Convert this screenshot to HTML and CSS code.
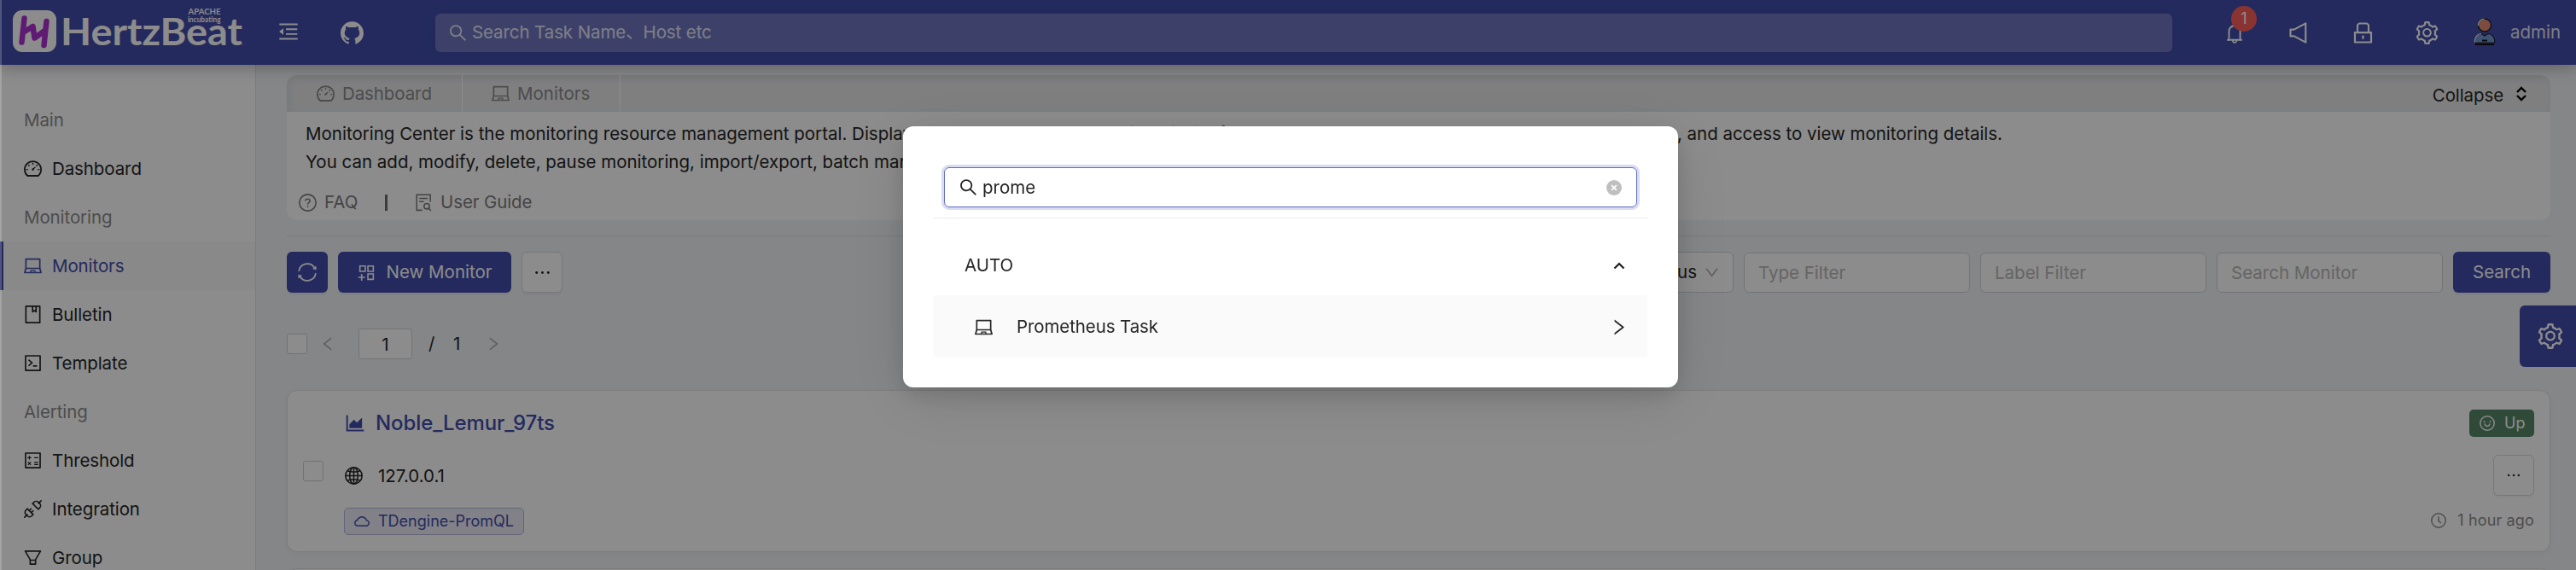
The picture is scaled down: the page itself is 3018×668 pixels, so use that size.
FILE: index.html
```html
<!DOCTYPE html>
<html lang="en">
<head>
<meta charset="utf-8">
<title>HertzBeat</title>
<link rel="stylesheet" href="styles.css">
</head>
<body>
<svg class="sprite" aria-hidden="true">
  <symbol id="search" viewBox="64 64 896 896"><path d="M909.6 854.5L649.9 594.8C690.2 542.7 712 479 712 412c0-80.2-31.3-155.4-87.9-212.1-56.6-56.7-132-87.9-212.1-87.9s-155.5 31.3-212.1 87.9C143.2 256.5 112 331.8 112 412c0 80.1 31.3 155.5 87.9 212.1C256.5 680.8 331.8 712 412 712c67 0 130.6-21.8 182.7-62l259.7 259.6a8.2 8.2 0 0011.6 0l43.6-43.5a8.2 8.2 0 000-11.6zM570.4 570.4C528 612.7 471.8 636 412 636s-116-23.3-158.4-65.6C211.3 528 188 471.8 188 412s23.3-116.1 65.6-158.4C296 211.3 352.2 188 412 188s116.1 23.2 158.4 65.6S636 352.2 636 412s-23.3 116.1-65.6 158.4z"/></symbol>
  <symbol id="laptop" viewBox="64 64 896 896"><path d="M956.9 845.1L896.4 632V168c0-17.7-14.3-32-32-32h-704c-17.7 0-32 14.3-32 32v464L67.9 845.1C60.4 866 75.8 888 98 888h828.8c22.2 0 37.6-22 30.1-42.9zM200.4 208h624v395h-624V208zm228.3 608l8.1-37h150.3l8.1 37H428.7zm224 0l-19.1-86.7c-.8-3.7-4.1-6.3-7.8-6.3H398.2c-3.8 0-7 2.6-7.8 6.3L371.3 816H151l42.3-149h638.2l42.3 149H652.7z"/></symbol>
  <symbol id="dashboard" viewBox="64 64 896 896"><path d="M924.8 385.6a446.7 446.7 0 00-96-142.4 446.7 446.7 0 00-142.4-96C631.1 123.8 572.5 112 512 112s-119.1 11.8-174.4 35.2a446.7 446.7 0 00-142.4 96 446.7 446.7 0 00-96 142.4C75.8 440.9 64 499.5 64 560c0 132.7 58.3 257.7 159.9 343.1l1.7 1.4c5.8 4.8 13.1 7.5 20.6 7.5h531.7c7.5 0 14.8-2.7 20.6-7.5l1.7-1.4C901.7 817.7 960 692.7 960 560c0-60.5-11.9-119.1-35.2-174.4zM761.4 836H262.6A371.12 371.12 0 01140 560c0-99.4 38.7-192.8 109-263 70.3-70.3 163.7-109 263-109 99.4 0 192.8 38.7 263 109 70.3 70.3 109 163.7 109 263 0 105.6-44.5 205.5-122.6 276zM623.5 421.5a8.03 8.03 0 00-11.3 0L527.7 506c-18.7-5-39.4-.2-54.1 14.5a55.95 55.95 0 000 79.2 55.95 55.95 0 0079.2 0 55.87 55.87 0 0014.5-54.1l84.5-84.5c3.1-3.1 3.1-8.2 0-11.3l-28.3-28.3zM490 320h44c4.4 0 8-3.6 8-8v-80c0-4.4-3.6-8-8-8h-44c-4.4 0-8 3.6-8 8v80c0 4.4 3.6 8 8 8zm260 218v44c0 4.4 3.6 8 8 8h80c4.4 0 8-3.6 8-8v-44c0-4.4-3.6-8-8-8h-80c-4.4 0-8 3.6-8 8zm12.7-197.2l-31.1-31.1a8.03 8.03 0 00-11.3 0l-56.6 56.6a8.03 8.03 0 000 11.3l31.1 31.1c3.1 3.1 8.2 3.1 11.3 0l56.6-56.6c3.1-3.1 3.1-8.2 0-11.3zm-458.6-31.1a8.03 8.03 0 00-11.3 0l-31.1 31.1a8.03 8.03 0 000 11.3l56.6 56.6c3.1 3.1 8.2 3.1 11.3 0l31.1-31.1c3.1-3.1 3.1-8.2 0-11.3l-56.6-56.6zM262 530h-80c-4.4 0-8 3.6-8 8v44c0 4.4 3.6 8 8 8h80c4.4 0 8-3.6 8-8v-44c0-4.4-3.6-8-8-8z"/></symbol>
  <symbol id="setting" viewBox="64 64 896 896"><path d="M924.8 625.7l-65.5-56c3.1-19 4.7-38.4 4.7-57.8s-1.6-38.8-4.7-57.8l65.5-56a32.03 32.03 0 009.3-35.2l-.9-2.6a443.74 443.74 0 00-79.7-137.9l-1.8-2.1a32.12 32.12 0 00-35.1-9.5l-81.3 28.9c-30-24.6-63.5-44-99.7-57.6l-15.7-85a32.05 32.05 0 00-25.8-25.7l-2.7-.5c-52.1-9.4-106.9-9.4-159 0l-2.7.5a32.05 32.05 0 00-25.8 25.7l-15.8 85.4a351.86 351.86 0 00-99 57.4l-81.9-29.1a32 32 0 00-35.1 9.5l-1.8 2.1a446.02 446.02 0 00-79.7 137.9l-.9 2.6c-4.5 12.5-.8 26.5 9.3 35.2l66.3 56.6c-3.1 18.8-4.6 38-4.6 57.1 0 19.2 1.5 38.4 4.6 57.1L99 625.5a32.03 32.03 0 00-9.3 35.2l.9 2.6c18.1 50.4 44.9 96.9 79.7 137.9l1.8 2.1a32.12 32.12 0 0035.1 9.5l81.9-29.1c29.8 24.5 63.1 43.9 99 57.4l15.8 85.4a32.05 32.05 0 0025.8 25.7l2.7.5a449.4 449.4 0 00159 0l2.7-.5a32.05 32.05 0 0025.8-25.7l15.7-85a350 350 0 0099.7-57.6l81.3 28.9a32 32 0 0035.1-9.5l1.8-2.1c34.8-41.1 61.6-87.5 79.7-137.9l.9-2.6c4.5-12.3.8-26.3-9.3-35zM788.3 465.9c2.5 15.1 3.8 30.6 3.8 46.1s-1.3 31-3.8 46.1l-6.6 40.1 74.7 63.9a370.03 370.03 0 01-42.6 73.6L721 702.8l-31.4 25.8c-23.9 19.6-50.5 35-79.3 45.8l-38.1 14.3-17.9 97a377.5 377.5 0 01-85 0l-17.9-97.2-37.8-14.5c-28.5-10.8-55-26.2-78.7-45.7l-31.4-25.9-93.4 33.2c-17-22.9-31.2-47.6-42.6-73.6l75.5-64.5-6.5-40c-2.4-14.9-3.7-30.3-3.7-45.5 0-15.3 1.2-30.6 3.7-45.5l6.5-40-75.5-64.5c11.3-26.1 25.6-50.7 42.6-73.6l93.4 33.2 31.4-25.9c23.7-19.5 50.2-34.9 78.7-45.7l37.9-14.3 17.9-97.2c28.1-3.2 56.8-3.2 85 0l17.9 97 38.1 14.3c28.7 10.8 55.4 26.2 79.3 45.8l31.4 25.8 92.8-32.9c17 22.9 31.2 47.6 42.6 73.6L781.8 426l6.5 39.9zM512 326c-97.2 0-176 78.8-176 176s78.8 176 176 176 176-78.8 176-176-78.8-176-176-176zm79.2 255.2A111.6 111.6 0 01512 614c-29.9 0-58-11.7-79.2-32.8A111.6 111.6 0 01400 502c0-29.9 11.7-58 32.8-79.2C454 401.6 482.1 390 512 390c29.9 0 58 11.6 79.2 32.8A111.6 111.6 0 01624 502c0 29.9-11.7 58-32.8 79.2z"/></symbol>
  <symbol id="github" viewBox="64 64 896 896"><path d="M511.6 76.3C264.3 76.2 64 276.4 64 523.5 64 718.9 189.3 885 363.8 946c23.5 5.9 19.9-10.8 19.9-22.2v-77.5c-135.7 15.9-141.2-73.9-150.3-88.9C215 726 171.5 718 184.5 703c30.9-15.9 62.4 4 98.9 57.9 26.4 39.1 77.9 32.5 104 26 5.7-23.5 17.9-44.5 34.7-60.8-140.6-25.2-199.2-111-199.2-213 0-49.5 16.3-95 48.3-131.7-20.4-60.5 1.9-112.3 4.9-120 58.1-5.2 118.5 41.6 123.2 45.3 33-8.9 70.7-13.6 112.9-13.6 42.4 0 80.2 4.9 113.5 13.9 11.3-8.6 67.3-48.8 121.3-43.9 2.9 7.7 24.7 58.3 5.5 118 32.4 36.8 48.9 82.7 48.9 132.3 0 102.2-59 188.1-200 212.9a127.5 127.5 0 0138.1 91v112.5c.8 9 0 17.9 15 17.9 177.1-59.7 304.6-227 304.6-424.1 0-247.2-200.4-447.3-447.5-447.3z"/></symbol>
  <symbol id="fold" viewBox="64 64 896 896"><path d="M408 442h480c4.4 0 8-3.6 8-8v-56c0-4.4-3.6-8-8-8H408c-4.4 0-8 3.6-8 8v56c0 4.4 3.6 8 8 8zm-8 204c0 4.4 3.6 8 8 8h480c4.4 0 8-3.6 8-8v-56c0-4.4-3.6-8-8-8H408c-4.4 0-8 3.6-8 8v56zm504-486H120c-4.4 0-8 3.6-8 8v56c0 4.4 3.6 8 8 8h784c4.4 0 8-3.6 8-8v-56c0-4.4-3.6-8-8-8zm0 632H120c-4.4 0-8 3.6-8 8v56c0 4.4 3.6 8 8 8h784c4.4 0 8-3.6 8-8v-56c0-4.4-3.6-8-8-8zM115.4 518.9L271.7 642c5.8 4.6 14.4.5 14.4-6.9V388.9c0-7.4-8.5-11.5-14.4-6.9L115.4 505.1a8.74 8.74 0 000 13.8z"/></symbol>
  <symbol id="bell" viewBox="64 64 896 896"><path d="M816 768h-24V428c0-141.1-104.3-257.8-240-277.2V112c0-22.1-17.9-40-40-40s-40 17.9-40 40v38.8C336.3 170.2 232 286.9 232 428v340h-24c-17.7 0-32 14.3-32 32v32c0 4.4 3.6 8 8 8h216c0 61.8 50.2 112 112 112s112-50.2 112-112h216c4.4 0 8-3.6 8-8v-32c0-17.7-14.3-32-32-32zM512 888c-26.5 0-48-21.5-48-48h96c0 26.5-21.5 48-48 48zM304 768V428c0-55.6 21.6-107.8 60.9-147.1S456.4 220 512 220c55.6 0 107.8 21.6 147.1 60.9S720 372.4 720 428v340H304z"/></symbol>
  <symbol id="lock" viewBox="64 64 896 896"><path d="M832 464h-68V240c0-70.7-57.3-128-128-128H388c-70.7 0-128 57.3-128 128v224h-68c-17.7 0-32 14.3-32 32v384c0 17.7 14.3 32 32 32h640c17.7 0 32-14.3 32-32V496c0-17.7-14.3-32-32-32zM332 240c0-30.9 25.1-56 56-56h248c30.9 0 56 25.1 56 56v224H332V240zm460 600H232V536h560v304zM484 701v53c0 4.4 3.6 8 8 8h40c4.4 0 8-3.6 8-8v-53a48.01 48.01 0 10-56 0z"/></symbol>
  <symbol id="right" viewBox="64 64 896 896"><path d="M765.7 486.8L314.9 134.7A7.97 7.97 0 00302 141v77.3c0 4.9 2.3 9.6 6.1 12.6l360 281.1-360 281.1c-3.9 3-6.1 7.7-6.1 12.6V883c0 6.7 7.7 10.4 12.9 6.3l450.8-352.1a31.96 31.96 0 000-50.4z"/></symbol>
  <symbol id="left" viewBox="64 64 896 896"><path d="M724 218.3V141c0-6.7-7.7-10.4-12.9-6.3L260.3 486.8a31.86 31.86 0 000 50.3l450.8 352.1c5.3 4.1 12.9.4 12.9-6.3v-77.3c0-4.9-2.3-9.6-6.1-12.6l-360-281 360-281.1c3.8-3 6.1-7.7 6.1-12.6z"/></symbol>
  <symbol id="down" viewBox="64 64 896 896"><path d="M884 256h-75c-5.1 0-9.9 2.5-12.9 6.6L512 654.2 227.9 262.6c-3-4.1-7.8-6.6-12.9-6.6h-75c-6.5 0-10.3 7.4-6.5 12.7l352.6 486.1c12.8 17.6 39 17.6 51.7 0l352.6-486.1c3.9-5.3.1-12.7-6.4-12.7z"/></symbol>
  <symbol id="cloud" viewBox="64 64 896 896"><path d="M811.4 418.7C765.6 297.9 648.9 212 512.2 212S258.8 297.8 213 418.6C127.3 441.1 64 519.1 64 612c0 110.5 89.5 200 199.9 200h496.2C870.5 812 960 722.5 960 612c0-92.7-63.1-170.7-148.6-193.3zm36.3 281a123.07 123.07 0 01-87.6 36.3H263.9c-33.1 0-64.2-12.9-87.6-36.3A123.3 123.3 0 01140 612c0-28 9.1-54.3 26.2-76.3a125.7 125.7 0 0166.1-43.7l37.9-9.9 13.9-36.6c8.6-22.8 20.6-44.1 35.7-63.4a245.6 245.6 0 0152.4-49.9c41.1-28.9 89.5-44.2 140-44.2s98.9 15.3 140 44.2c19.9 14 37.5 30.8 52.4 49.9 15.1 19.3 27.1 40.7 35.7 63.4l13.8 36.5 37.8 10c54.3 14.5 92.1 63.8 92.1 120 0 33.1-12.9 64.3-36.3 87.7z"/></symbol>
  <symbol id="area" viewBox="64 64 896 896"><path d="M888 792H200V168c0-4.4-3.6-8-8-8h-56c-4.4 0-8 3.6-8 8v688c0 4.4 3.6 8 8 8h752c4.4 0 8-3.6 8-8v-56c0-4.4-3.6-8-8-8zm-616-64h536c4.4 0 8-3.6 8-8V284c0-7.2-8.7-10.7-13.7-5.7L592 488.6l-125.4-124a8.03 8.03 0 00-11.3 0l-189 189.6a7.87 7.87 0 00-2.3 5.6V720c0 4.4 3.6 8 8 8z"/></symbol>
  <symbol id="appadd" viewBox="64 64 896 896"><g fill="none" stroke="currentColor" stroke-width="68"><path d="M178 178h268v268H178zM578 178h268v268H578zM578 578h268v268H578z"/><path d="M96 744h336M264 576v336"/></g></symbol>
  <symbol id="sync" viewBox="64 64 896 896"><g fill="none" stroke="currentColor" stroke-width="66"><path d="M143 470A372 372 0 01826 316M881 554A372 372 0 01198 708"/></g><path d="M738 372l172 36-8-176zM286 652L114 616l8 176z"/></symbol>
  <symbol id="sound" viewBox="64 64 896 896"><path fill="none" stroke="currentColor" stroke-width="72" stroke-linejoin="round" d="M180 382h140l450-240v740L320 642H180z"/></symbol>
  <symbol id="book" viewBox="64 64 896 896"><path fill="none" stroke="currentColor" stroke-width="72" stroke-linejoin="round" d="M164 100h696v824H164zM500 100v280l86-66 86 66V100"/></symbol>
  <symbol id="code" viewBox="64 64 896 896"><path fill="none" stroke="currentColor" stroke-width="72" stroke-linejoin="round" d="M148 148h728v728H148z"/><path fill="none" stroke="currentColor" stroke-width="68" d="M300 350l170 150-170 150M520 656h200"/></symbol>
  <symbol id="calc" viewBox="64 64 896 896"><path fill="none" stroke="currentColor" stroke-width="72" stroke-linejoin="round" d="M148 148h728v728H148z"/><path fill="none" stroke="currentColor" stroke-width="52" d="M250 380h180M340 290v180M580 380h200M580 610h200M580 720h200M268 590l144 150M412 590L268 740"/></symbol>
  <symbol id="api" viewBox="64 64 896 896"><g fill="none" stroke="currentColor" stroke-width="68" stroke-linecap="round"><path d="M100 924l130-130M794 230l130-130"/><path d="M240 500L524 784l-60 70a160 160 0 01-236 0l-60-60a160 160 0 010-230zM500 240L784 524l66-70a160 160 0 000-226l-54-54a160 160 0 00-226 0z"/><path d="M330 590l90-90M434 694l90-90"/></g></symbol>
  <symbol id="filter" viewBox="64 64 896 896"><path fill="none" stroke="currentColor" stroke-width="70" stroke-linejoin="round" d="M130 186h764L646 610v228H378V610zM378 640h268"/></symbol>
  <symbol id="question" viewBox="64 64 896 896"><g fill="none" stroke="currentColor" stroke-width="68"><circle cx="512" cy="512" r="412"/><path d="M400 425c0-130 224-130 224 0 0 80-112 92-112 180"/></g><circle cx="512" cy="704" r="40"/></symbol>
  <symbol id="guide" viewBox="64 64 896 896"><g fill="none" stroke="currentColor" stroke-width="66"><path d="M430 890H160V120h680v350M290 300h420M290 460h220"/><circle cx="660" cy="690" r="136"/><path d="M756 786l110 130"/></g></symbol>
  <symbol id="globe" viewBox="64 64 896 896"><g fill="none" stroke="currentColor" stroke-width="66"><circle cx="512" cy="512" r="412"/><ellipse cx="512" cy="512" rx="205" ry="412"/><path d="M512 100v824M100 512h824M190 270q322 120 644 0M190 754q322-120 644 0"/></g></symbol>
  <symbol id="smile" viewBox="64 64 896 896"><g fill="none" stroke="currentColor" stroke-width="72"><circle cx="512" cy="512" r="410"/><path d="M370 540c16 190 268 190 284 0"/></g><circle cx="336" cy="421" r="48"/><circle cx="688" cy="421" r="48"/></symbol>
  <symbol id="clock" viewBox="64 64 896 896"><g fill="none" stroke="currentColor" stroke-width="72"><circle cx="512" cy="512" r="410"/><path d="M512 280v270l150 110"/></g></symbol>
  <symbol id="dots" viewBox="64 64 896 896"><circle cx="222" cy="512" r="62"/><circle cx="512" cy="512" r="62"/><circle cx="802" cy="512" r="62"/></symbol>
  <symbol id="close" viewBox="64 64 896 896"><circle cx="512" cy="512" r="448"/><path d="M368 368l288 288M656 368L368 656" stroke="#fff" stroke-width="84"/></symbol>
</svg>

<div class="page">
  <header class="header">
    <svg class="logo" viewBox="0 0 300 76">
      <rect x="15" y="12" width="51" height="49" rx="11" fill="#fff"/>
      <path d="M28.500 21.500L25.500 49.500M54.500 25L51.500 53M27 38L38.500 31L40.500 44.500L52.500 36" fill="none" stroke="#ad31d1" stroke-width="6.500" stroke-linecap="round" stroke-linejoin="round"/>
      <text class="logo-name" x="71" y="53" textLength="213" lengthAdjust="spacingAndGlyphs">HertzBeat</text>
      <text class="logo-tag" x="220.500" y="16.500" textLength="38" lengthAdjust="spacingAndGlyphs">APACHE</text>
      <text class="logo-sub" x="220" y="26" textLength="38.500" lengthAdjust="spacingAndGlyphs">incubating</text>
    </svg>
    <svg class="icon i24 fold"><use href="#fold"/></svg>
    <svg class="icon i27 github"><use href="#github"/></svg>
    <div class="top-search"><svg class="icon"><use href="#search"/></svg><span>Search Task Name、Host etc</span></div>
    <div class="actions">
      <span class="bell"><svg class="icon i24"><use href="#bell"/></svg><b class="count">1</b></span>
      <svg class="icon i27"><use href="#sound"/></svg>
      <svg class="icon i27"><use href="#lock"/></svg>
      <svg class="icon i27"><use href="#setting"/></svg>
    </div>
    <svg class="avatar" viewBox="0 0 28 34">
      <path d="M2 30C2 23 6 19.500 10 19.500L14 22L18 19.500C22 19.500 26 23 26 30Z" fill="#7196d8" stroke="#202020" stroke-width="1.200"/>
      <path d="M2 30C2 23 6 19.500 10 19.500" fill="none" stroke="#fff" stroke-width="1.200"/>
      <circle cx="14" cy="9.500" r="7.500" fill="#e08a74" stroke="#202020" stroke-width="1.400"/>
      <path d="M6.500 10a7.500 7.500 0 017-8" fill="none" stroke="#fff" stroke-width="1.200"/>
      <path d="M11 27.500h6M3 32h22" stroke="#111" stroke-width="1.800"/>
    </svg>
    <span class="admin">admin</span>
  </header>

  <div class="body">
    <nav class="side">
      <div class="group">Main</div>
      <a class="item"><svg class="icon"><use href="#dashboard"/></svg>Dashboard</a>
      <div class="group">Monitoring</div>
      <a class="item active"><svg class="icon"><use href="#laptop"/></svg>Monitors</a>
      <a class="item"><svg class="icon"><use href="#book"/></svg>Bulletin</a>
      <a class="item"><svg class="icon"><use href="#code"/></svg>Template</a>
      <div class="group">Alerting</div>
      <a class="item"><svg class="icon"><use href="#calc"/></svg>Threshold</a>
      <a class="item"><svg class="icon"><use href="#api"/></svg>Integration</a>
      <a class="item"><svg class="icon"><use href="#filter"/></svg>Group</a>
    </nav>

    <main class="main">
      <section class="intro">
        <div class="tabs">
          <span class="tab tab-first"><svg class="icon"><use href="#dashboard"/></svg>Dashboard</span>
          <span class="tab"><svg class="icon"><use href="#laptop"/></svg>Monitors</span>
          <span class="collapse">Collapse<svg class="updown" viewBox="0 0 14 18"><path d="M2 7L7 2L12 7M2 11L7 16L12 11"/></svg></span>
        </div>
        <div class="about">
          <p><span class="lead">Monitoring Center is the monitoring resource management portal. Displays the currently added monitors in list form</span><span class="tail">, and access to view monitoring details.</span></p>
          <p><span>You can add, modify, delete, pause monitoring, import/export, batch manage.</span></p>
        </div>
        <div class="links">
          <svg class="icon"><use href="#question"/></svg><span class="faq">FAQ</span><i class="bar"></i><svg class="icon"><use href="#guide"/></svg><span class="guide">User Guide</span>
        </div>
      </section>
      <hr class="rule">
      <div class="toolbar">
        <button class="btn primary square"><svg class="icon i24"><use href="#sync"/></svg></button>
        <button class="btn primary new"><svg class="icon"><use href="#appadd"/></svg><span>New Monitor</span></button>
        <button class="btn plain more"><svg class="icon"><use href="#dots"/></svg></button>
        <div class="filters">
          <div class="select">Status<svg class="icon i17"><use href="#down"/></svg></div>
          <div class="field">Type Filter</div>
          <div class="field">Label Filter</div>
          <div class="field">Search Monitor</div>
          <button class="btn primary go">Search</button>
        </div>
      </div>
      <div class="pager">
        <i class="check"></i>
        <svg class="icon i18 prev"><use href="#left"/></svg>
        <span class="page-input">1</span><span class="slash">/</span><span class="total">1</span>
        <svg class="icon i18 next"><use href="#right"/></svg>
      </div>
      <article class="card">
        <i class="check"></i>
        <div class="info">
          <div class="name"><svg class="icon i24"><use href="#area"/></svg><span>Noble_Lemur_97ts</span></div>
          <div class="host"><svg class="icon"><use href="#globe"/></svg><span>127.0.0.1</span></div>
          <div class="tag"><svg class="icon i18"><use href="#cloud"/></svg><span>TDengine-PromQL</span></div>
        </div>
        <div class="state">
          <span class="up"><svg class="icon i18"><use href="#smile"/></svg>Up</span>
          <button class="btn plain more"><svg class="icon i18"><use href="#dots"/></svg></button>
          <span class="ago"><svg class="icon i18"><use href="#clock"/></svg>1 hour ago</span>
        </div>
      </article>
      <article class="card"></article>
    </main>
  </div>
  <div class="drawer"><svg class="icon i30"><use href="#setting"/></svg></div>
</div>

<div class="mask"></div>
<div class="edge"></div>

<div class="modal">
  <div class="query"><svg class="icon"><use href="#search"/></svg><span>prome</span><svg class="icon i18 clear"><use href="#close"/></svg></div>
  <div class="section"><span>AUTO</span><svg class="caret" viewBox="0 0 14 9"><path d="M1.500 7.500L7 2L12.500 7.500"/></svg></div>
  <div class="result"><svg class="icon"><use href="#laptop"/></svg><span>Prometheus Task</span><svg class="icon arrow"><use href="#right"/></svg></div>
</div>
</body>
</html>
```
FILE: styles.css
```css
* { box-sizing: border-box; }
body {
  margin: 0;
  width: 3018px;
  height: 668px;
  overflow: hidden;
  background: #f2f4f7;
  color: #262626;
  font: 20.5px/30px Inter, "Noto Sans CJK SC", sans-serif;
}
.sprite { display: none; }
p { margin: 0; }
.icon { width: 21px; height: 21px; flex: none; fill: currentColor; display: block; }
.i17 { width: 17px; height: 17px; }
.i18 { width: 18px; height: 18px; }
.i24 { width: 24px; height: 24px; }
.i27 { width: 27px; height: 27px; }
.i30 { width: 30px; height: 30px; }

.page { height: 668px; overflow: hidden; }
.header {
  position: relative;
  z-index: 2;
  display: flex;
  align-items: center;
  height: 76px;
  background: #424eab;
  color: #fff;
  box-shadow: 0 3px 18px rgba(0, 0, 0, .28);
}
.logo { width: 300px; height: 76px; flex: none; fill: #fff; }
.logo-name { font: 700 43px Lato, sans-serif; }
.logo-tag { font: 700 9.5px Lato, sans-serif; }
.logo-sub { font: 700 8.5px Lato, sans-serif; }
.fold { margin: -2px 0 0 26px; }
.github { margin-left: 49px; }
.top-search {
  display: flex;
  align-items: center;
  gap: 6px;
  width: 2035px;
  height: 45px;
  margin-left: 84px;
  padding-left: 16px;
  border-radius: 6px;
  background: #6f77c2;
  color: #e6e8f5;
  letter-spacing: -.1px;
  box-shadow: 0 0 18px rgba(0, 0, 0, .06);
}
.actions { display: flex; align-items: center; gap: 48px; margin-left: 61px; }
.bell { position: relative; width: 26px; padding-top: 1px; }
.count {
  position: absolute;
  left: 8px;
  top: -19px;
  width: 30px;
  height: 30px;
  border-radius: 50%;
  background: #f95f59;
  font-weight: 400;
  font-size: 18px;
  text-align: center;
}
.avatar { width: 28px; height: 34px; margin: 0 0 2px 40px; }
.admin { margin-left: 16px; color: #e2e4f2; }

.body { display: flex; height: 592px; }
.side {
  width: 300px;
  flex: none;
  padding-top: 36px;
  border-right: 1px solid #e4e0e4;
  background: #fff;
  letter-spacing: -.1px;
}
.group, .item { display: flex; align-items: center; height: 57px; }
.group { padding-left: 28px; color: #8c8c8c; }
.item { gap: 12px; padding-left: 28px; }
.active { background: #fafafa; color: #424eab; box-shadow: inset 4px 0 #424eab; }

.main { width: 2652px; margin-left: 36px; padding-top: 12px; }
.intro { height: 170px; border-radius: 12px; background: #fff; overflow: hidden; }
.tabs { display: flex; height: 43px; background: #e7e8ea; color: #8a8a8a; box-shadow: inset 3px 3px 12px rgba(0, 0, 0, .06); }
.tab { display: flex; align-items: center; gap: 9px; width: 185px; padding-left: 34px; border-right: 1px solid #fff; }
.tab-first { width: 206px; padding-left: 35px; letter-spacing: -.1px; }
.collapse { display: flex; align-items: center; gap: 14px; margin: 4px 27px 0 auto; color: #262626; letter-spacing: -.1px; }
.updown { width: 14px; height: 18px; fill: none; stroke: #000; stroke-width: 2.4; margin-top: -3px; }
.about { padding: 9px 22px 0; line-height: 33px; }
.about p { display: flex; white-space: nowrap; }
.lead { width: 1607px; overflow: hidden; }
.tail { letter-spacing: -.03px; }
.links { display: flex; align-items: center; padding: 16px 0 0 14px; color: #7d7d7d; }
.faq { margin-left: 9px; width: 71px; }
.bar { width: 3px; height: 19px; margin-right: 32px; background: #6c6c6c; }
.guide { margin-left: 9px; letter-spacing: -.1px; }
.rule { height: 1px; margin: 18px 0; border: 0; background: #dcdee0; }

.btn {
  display: flex;
  align-items: center;
  justify-content: center;
  height: 48px;
  padding: 0;
  border: 0;
  border-radius: 6px;
  font: inherit;
  color: inherit;
  box-shadow: 0 3px 0 rgba(0, 0, 0, .03);
}
.primary { background: #424eab; color: #fff; }
.plain { border: 1px solid #d9d9d9; background: #fff; }
.toolbar { display: flex; }
.square { width: 48px; }
.new { width: 203px; margin-left: 12px; gap: 13px; }
.more { width: 48px; }
.toolbar .more { margin-left: 12px; }
.filters { display: flex; align-items: flex-end; gap: 12px; margin-left: auto; }
.select, .field { display: flex; align-items: center; border: 1px solid #d4d4d4; border-radius: 6px; background: #fff; }
.select { width: 180px; height: 48px; justify-content: flex-end; gap: 9px; padding-right: 16px; }
.select .icon { color: #a8a8a8; }
.field { width: 265px; height: 47px; padding-left: 16px; color: #b8b8b8; }
.go { width: 114px; }

.pager { display: flex; align-items: center; height: 36px; margin-top: 42px; }
.check { display: block; width: 24px; height: 24px; flex: none; border: 1px solid #cfcfcf; border-radius: 3px; background: #fff; }
.prev, .next { color: #a8aaac; }
.prev { margin-left: 15px; }
.page-input { width: 63px; height: 36px; margin-left: 27px; border: 1px solid #d4d4d4; border-radius: 3px; background: #fff; text-align: center; line-height: 36px; }
.slash { width: 29px; margin-left: 19px; }
.total { width: 38px; }

.card {
  display: flex;
  align-items: center;
  height: 190px;
  margin-top: 36px;
  padding: 0 18px;
  border: 1px solid #e2e2e2;
  border-radius: 12px;
  background: #fff;
  box-shadow: 0 2px 6px rgba(0, 0, 0, .04);
}
.card + .card { margin-top: 19px; }
.info { margin-left: 24px; }
.name, .host, .tag { display: flex; align-items: center; }
.name { height: 36px; gap: 12px; padding-left: 1px; color: #424eab; font-size: 24px; font-weight: 500; letter-spacing: -.1px; }
.host { height: 30px; gap: 18px; margin-top: 29px; padding-left: 1px; }
.tag { width: 211px; height: 32px; gap: 10px; margin-top: 22px; padding-left: 11px; border: 1px solid #b4b8dc; border-radius: 5px; background: #ececf6; color: #424eab; font-size: 18px; }
.state { display: flex; flex-direction: column; align-items: flex-end; margin-left: auto; font-size: 18px; }
.up { display: flex; align-items: center; gap: 11px; width: 76px; height: 32px; padding-left: 12px; border-radius: 5px; background: #578867; color: #fff; }
.state .more { margin-top: 21px; }
.ago { display: flex; align-items: center; gap: 13px; margin-top: 14px; color: #8c8c8c; letter-spacing: .15px; }

.drawer {
  position: fixed;
  z-index: 3;
  top: 358px;
  right: 0;
  display: flex;
  align-items: center;
  justify-content: center;
  width: 66px;
  height: 72px;
  padding-left: 6px;
  border-radius: 6px 0 0 6px;
  background: #424eab;
  color: #fff;
}
.mask { position: fixed; z-index: 4; inset: 0; background: rgba(0, 0, 0, .45); }
.edge { position: fixed; z-index: 5; inset: 0 auto 0 0; width: 2px; background: rgba(255, 255, 255, .2); }

.modal {
  position: fixed;
  z-index: 6;
  left: 1058px;
  top: 148px;
  width: 908px;
  height: 306px;
  padding: 48px 36px 0;
  border-radius: 12px;
  background: #fff;
  box-shadow: 0 9px 24px rgba(0, 0, 0, .12), 0 14px 72px rgba(0, 0, 0, .12);
}
.query {
  display: flex;
  align-items: center;
  gap: 6px;
  height: 47px;
  margin: 0 12px;
  padding: 0 17px;
  border: 1px solid #5f6cc0;
  border-radius: 6px;
  box-shadow: 0 0 0 3px #d9dcf0;
}
.clear { margin-left: auto; color: #bfbfbf; }
.section {
  display: flex;
  align-items: center;
  justify-content: space-between;
  height: 91px;
  margin-top: 12px;
  padding: 20px 26px 0 36px;
  border-top: 1px solid #ececec;
}
.caret { width: 14px; height: 9px; fill: none; stroke: #1f1f1f; stroke-width: 2.2; }
.result { display: flex; align-items: center; height: 72px; padding: 2px 23px 0 48px; background: #fafafa; }
.result span { margin-left: 28px; letter-spacing: -.1px; }
.arrow { margin-left: auto; }
```
